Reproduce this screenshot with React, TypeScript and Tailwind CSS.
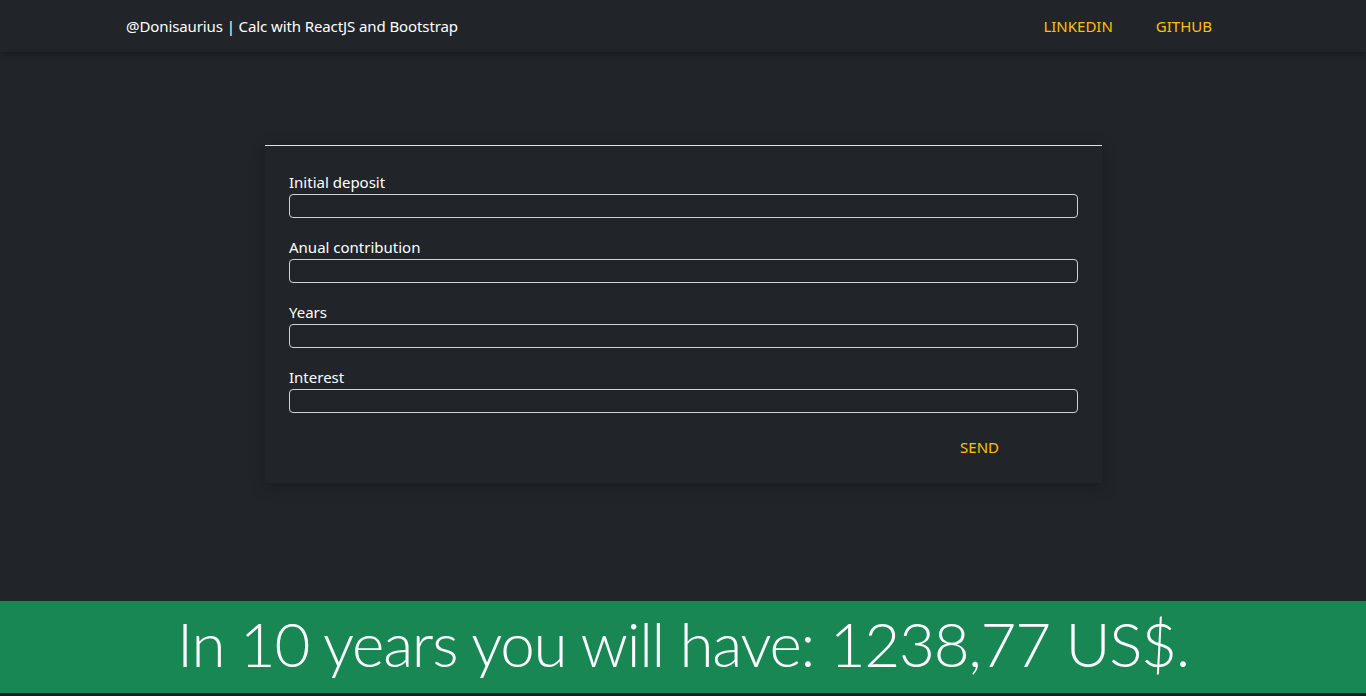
import React from "react";

const fields = ["Initial deposit", "Anual contribution", "Years", "Interest"];

export default function App() {
  return (
    <div
      className="h-screen flex flex-col bg-[#212529] text-white overflow-hidden"
      style={{ fontFamily: '"Noto Sans", "Open Sans", sans-serif' }}
    >
      {/* navbar */}
      <nav className="h-[52px] shrink-0 bg-[#212529] shadow-[0_3px_6px_rgba(0,0,0,0.25)] relative z-10">
        <div className="w-[1140px] mx-auto px-3 h-full flex items-center justify-between">
          <span className="text-[15px] text-white ml-px tracking-[-0.1px]">
            @Donisaurius | Calc with ReactJS and Bootstrap
          </span>
          <div className="flex items-center gap-[43px] mr-[29px] text-[15px] text-[#ffc107]">
            <a href="#">LINKEDIN</a>
            <a href="#">GITHUB</a>
          </div>
        </div>
      </nav>

      {/* form */}
      <main className="flex-1 pt-[93px]">
        <div className="w-[837px] mx-[265px] border-t border-[#dee2e6] shadow-[0_4px_14px_rgba(0,0,0,0.25)] px-6 pt-6 pb-6">
          {fields.map((f) => (
            <div key={f} className="mb-[17px]">
              <label className="block text-[15px] leading-6">{f}</label>
              <input
                type="text"
                className="block w-full h-6 rounded-[4px] border border-[#ced4da] bg-transparent"
              />
            </div>
          ))}
          <div className="flex justify-end pt-[5px]">
            <button className="mr-[79px] h-6 text-[15px] leading-6 text-[#ffc107]">
              SEND
            </button>
          </div>
        </div>
      </main>

      {/* result */}
      <div className="h-[92px] shrink-0 bg-[#198754] flex items-center justify-center">
        <h1
          className="text-[62px] font-light leading-none tracking-[-1.3px] pb-[8px]"
          style={{ fontFamily: 'Lato, "Open Sans", sans-serif' }}
        >
          In 10 years you will have: 1238,77 US$.
        </h1>
      </div>
      <div className="h-[3px] shrink-0 bg-[#1b1e21]" />
    </div>
  );
}
